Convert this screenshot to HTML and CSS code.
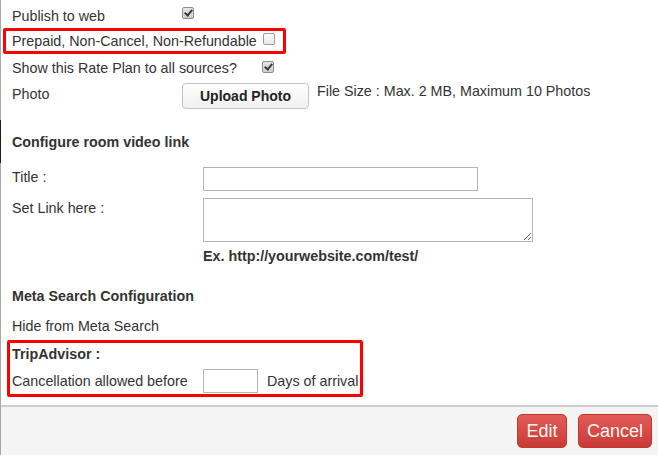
FILE: index.html
```html
<!DOCTYPE html>
<html lang="en">
<head>
    <meta charset="UTF-8">
    <meta name="viewport" content="width=device-width, initial-scale=1.0">
    <title>Rate Plan</title>
    <link rel="stylesheet" href="styles.css">
</head>
<body>
    <div class="modal-body">
        <div class="row row-publish">
            <label class="label label-short">Publish to web</label>
            <input type="checkbox" class="check" checked>
        </div>

        <div class="row highlight highlight-prepaid">
            <label class="label">Prepaid, Non-Cancel, Non-Refundable</label>
            <input type="checkbox" class="check check-inline">
        </div>

        <div class="row row-sources">
            <label class="label label-wide">Show this Rate Plan to all sources?</label>
            <input type="checkbox" class="check" checked>
        </div>

        <div class="row row-photo">
            <label class="label label-short">Photo</label>
            <button class="btn-upload">Upload Photo</button>
            <span class="file-info">File Size : Max. 2 MB, Maximum 10 Photos</span>
        </div>

        <h4 class="section-title title-video">Configure room video link</h4>

        <div class="row row-title">
            <label class="label label-form">Title :</label>
            <input type="text" class="text-input input-title">
        </div>

        <div class="row row-link">
            <label class="label label-form">Set Link here :</label>
            <textarea class="text-area"></textarea>
        </div>

        <div class="example">Ex. http://yourwebsite.com/test/</div>

        <h4 class="section-title title-meta">Meta Search Configuration</h4>

        <div class="row row-hide">
            <label class="label">Hide from Meta Search</label>
        </div>

        <div class="highlight highlight-trip">
            <div class="trip-title">TripAdvisor :</div>
            <div class="row row-cancel">
                <label class="label label-form">Cancellation allowed before</label>
                <input type="text" class="text-input input-days">
                <span class="days-label">Days of arrival</span>
            </div>
        </div>
    </div>

    <div class="modal-footer">
        <button class="btn-red btn-edit">Edit</button>
        <button class="btn-red btn-cancel">Cancel</button>
    </div>
</body>
</html>
```

FILE: styles.css
```css
html, body {
    margin: 0;
    height: 100%;
}

body {
    font-family: 'Liberation Sans', Arial, sans-serif;
    font-size: 14.3px;
    color: #333;
    background-color: #fff;
    /* borde izquierdo del panel, con el tramo oscuro */
    background-image: linear-gradient(to bottom, #a8a8a8 0, #a8a8a8 120px, #1e1e1e 120px, #1e1e1e 163px, #a8a8a8 163px);
    background-size: 1px 100%;
    background-repeat: no-repeat;
    display: flex;
    flex-direction: column;
    overflow: hidden;
}

.modal-body {
    padding: 4px 0 0 12px;
    height: 405px;
    flex-shrink: 0;
    box-sizing: border-box;
}

.row {
    display: flex;
    align-items: center;
}

.label {
    line-height: 20px;
    white-space: nowrap;
}

.label-short {
    width: 170px;
}

.label-wide {
    width: 250px;
}

.label-form {
    width: 191px;
}

.row-publish {
    height: 24px;
}

.check {
    appearance: none;
    -webkit-appearance: none;
    width: 12px;
    height: 12px;
    margin: 0;
    border: 1px solid #9a9a9a;
    border-radius: 2px;
    background: linear-gradient(#fdfdfd, #e9e9e9);
    position: relative;
    box-sizing: border-box;
}

.check:checked {
    background: linear-gradient(#e4e4e4, #cfcfcf);
    border-color: #8f8f8f;
}

.check:checked::after {
    content: '';
    position: absolute;
    left: 3px;
    top: 0px;
    width: 3px;
    height: 6px;
    border: solid #3a3a3a;
    border-width: 0 2px 2px 0;
    transform: rotate(40deg);
}

.row-publish .check {
    margin-top: -7px;
}

.check-inline {
    margin-left: 6px;
    margin-top: -4px;
}

.highlight {
    border: 3px solid #f00;
    border-radius: 2px;
}

.highlight-prepaid {
    margin-left: -9px;
    width: 283px;
    height: 26px;
    box-sizing: border-box;
    padding-left: 6px;
}

.row-sources {
    height: 27px;
}

.row-sources .check {
    margin-top: -2px;
}

.row-photo {
    margin-top: 3px;
    align-items: flex-start;
    height: 25px;
}

.btn-upload {
    font-family: 'Liberation Sans', Arial, sans-serif;
    font-weight: bold;
    font-size: 14px;
    color: #222;
    width: 127px;
    height: 26px;
    border: 1px solid #c4c4c4;
    border-radius: 4px;
    background: linear-gradient(#fff, #f0f0f0);
    padding: 0;
    margin-top: -1px;
}

.file-info {
    margin-left: 8px;
    line-height: 15px;
}

.section-title {
    margin: 0;
    font-size: 14.3px;
    font-weight: bold;
    line-height: 20px;
}

.title-video {
    margin-top: 23px;
}

.row-title {
    margin-top: 15px;
    align-items: flex-start;
}

.text-input {
    height: 24px;
    box-sizing: border-box;
    border: 1px solid #b4b4b4;
    border-radius: 0;
    margin: 0;
    padding: 2px 4px;
}

.input-title {
    width: 275px;
}

.row-link {
    margin-top: 7px;
    align-items: flex-start;
}

.text-area {
    width: 330px;
    height: 44px;
    box-sizing: border-box;
    border: 1px solid #b4b4b4;
    margin: 0;
    padding: 2px 4px;
    resize: both;
}

.example {
    margin-left: 191px;
    font-weight: bold;
    line-height: 20px;
    margin-top: 4px;
}

.title-meta {
    margin-top: 20px;
}

.row-hide {
    margin-top: 10px;
}

.highlight-trip {
    display: inline-block;
    margin-left: -5px;
    margin-top: 4px;
    padding: 1px 2px 1px 2px;
}

.trip-title {
    font-weight: bold;
    line-height: 20px;
}

.row-cancel {
    margin-top: 5px;
}

.input-days {
    width: 55px;
}

.days-label {
    margin-left: 9px;
}

.modal-footer {
    flex: 1;
    background-color: #f4f4f4;
    border-top: 2px solid #cfcfcf;
    display: flex;
    justify-content: flex-end;
    align-items: flex-start;
    gap: 11px;
    padding: 7px 6px 0 0;
    margin-left: 1px;
}

.btn-red {
    font-family: 'Liberation Sans', Arial, sans-serif;
    font-size: 18px;
    color: #fff8f0;
    height: 34px;
    border: 1px solid #c0392b;
    border-radius: 5px;
    background: linear-gradient(#e35b59, #c93a36);
    padding: 0;
}

.btn-edit {
    width: 50px;
}

.btn-cancel {
    width: 74px;
}
```
